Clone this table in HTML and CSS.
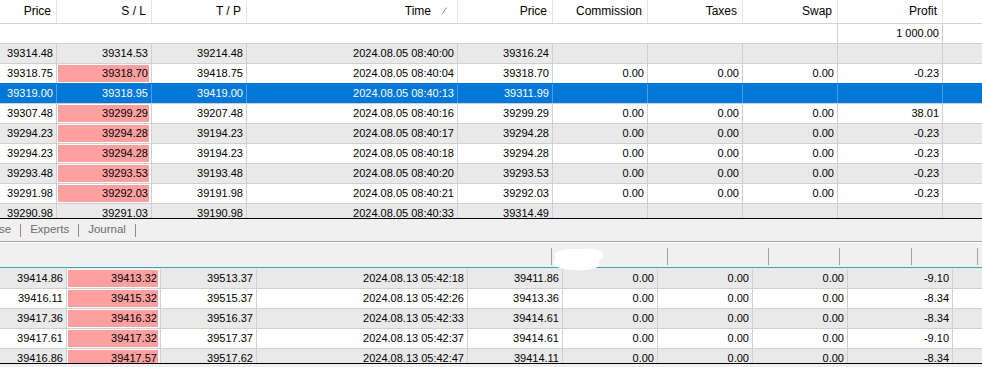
FILE: index.html
```html
<!DOCTYPE html>
<html>
<head>
<meta charset="utf-8">
<link rel="stylesheet" href="styles.css">
</head>
<body>
<div class="top">
  <div class="hdr gt">
    <div class="h">Price</div>
    <div class="h">S / L</div>
    <div class="h">T / P</div>
    <div class="h time">Time<svg class="sort" width="5" height="7" viewBox="0 0 5 7"><path d="M0.5 6.5 L4.5 0.5" stroke="#8a8a8a" stroke-width="1" fill="none"/></svg></div>
    <div class="h">Price</div>
    <div class="h">Commission</div>
    <div class="h">Taxes</div>
    <div class="h">Swap</div>
    <div class="h">Profit</div>
    <div class="h last"></div>
  </div>
  <div class="tot gt">
    <div class="c"></div><div class="c"></div><div class="c"></div><div class="c"></div><div class="c"></div><div class="c"></div><div class="c"></div>
    <div class="c b"></div>
    <div class="c b">1 000.00</div>
    <div class="c"></div>
  </div>
  <div class="r g gt"><div class="c">39314.48</div><div class="c">39314.53</div><div class="c">39214.48</div><div class="c">2024.08.05 08:40:00</div><div class="c">39316.24</div><div class="c"></div><div class="c"></div><div class="c"></div><div class="c"></div><div class="c last"></div></div>
  <div class="r gt"><div class="c">39318.75</div><div class="c sl">39318.70</div><div class="c">39418.75</div><div class="c">2024.08.05 08:40:04</div><div class="c">39318.70</div><div class="c">0.00</div><div class="c">0.00</div><div class="c">0.00</div><div class="c">-0.23</div><div class="c last"></div></div>
  <div class="r sel gt"><div class="c">39319.00</div><div class="c">39318.95</div><div class="c">39419.00</div><div class="c">2024.08.05 08:40:13</div><div class="c">39311.99</div><div class="c"></div><div class="c"></div><div class="c"></div><div class="c"></div><div class="c last"></div></div>
  <div class="r gt"><div class="c">39307.48</div><div class="c sl">39299.29</div><div class="c">39207.48</div><div class="c">2024.08.05 08:40:16</div><div class="c">39299.29</div><div class="c">0.00</div><div class="c">0.00</div><div class="c">0.00</div><div class="c">38.01</div><div class="c last"></div></div>
  <div class="r g gt"><div class="c">39294.23</div><div class="c sl">39294.28</div><div class="c">39194.23</div><div class="c">2024.08.05 08:40:17</div><div class="c">39294.28</div><div class="c">0.00</div><div class="c">0.00</div><div class="c">0.00</div><div class="c">-0.23</div><div class="c last"></div></div>
  <div class="r gt"><div class="c">39294.23</div><div class="c sl">39294.28</div><div class="c">39194.23</div><div class="c">2024.08.05 08:40:18</div><div class="c">39294.28</div><div class="c">0.00</div><div class="c">0.00</div><div class="c">0.00</div><div class="c">-0.23</div><div class="c last"></div></div>
  <div class="r g gt"><div class="c">39293.48</div><div class="c sl">39293.53</div><div class="c">39193.48</div><div class="c">2024.08.05 08:40:20</div><div class="c">39293.53</div><div class="c">0.00</div><div class="c">0.00</div><div class="c">0.00</div><div class="c">-0.23</div><div class="c last"></div></div>
  <div class="r gt"><div class="c">39291.98</div><div class="c sl">39292.03</div><div class="c">39191.98</div><div class="c">2024.08.05 08:40:21</div><div class="c">39292.03</div><div class="c">0.00</div><div class="c">0.00</div><div class="c">0.00</div><div class="c">-0.23</div><div class="c last"></div></div>
  <div class="r g gt"><div class="c">39290.98</div><div class="c">39291.03</div><div class="c">39190.98</div><div class="c">2024.08.05 08:40:33</div><div class="c">39314.49</div><div class="c"></div><div class="c"></div><div class="c"></div><div class="c"></div><div class="c last"></div></div>
</div>

<div class="tabs">
  <span class="tab first">se</span><span class="sep"></span>
  <span class="tab">Experts</span><span class="sep"></span>
  <span class="tab">Journal</span><span class="sep"></span>
</div>

<div class="bhdr">
  <div class="hc"></div><div class="hc s"></div><div class="hc s"></div><div class="hc s"></div><div class="hc s"></div><div class="hc s"></div><div class="hc s"></div>
  <svg class="blot" width="54" height="25" viewBox="0 0 54 25"><path d="M5 5 C12 1 24 2 34 2 C44 1 52 4 51 9 C50 13 45 14 47 17 C48 21 38 24 26 23 C16 23 6 22 3 18 C0 15 2 12 4 10 C2 8 2 6 5 5 Z" fill="#ffffff"/></svg>
</div>

<div class="bot">
  <div class="r g gb"><div class="c">39414.86</div><div class="c sl">39413.32</div><div class="c">39513.37</div><div class="c">2024.08.13 05:42:18</div><div class="c">39411.86</div><div class="c">0.00</div><div class="c">0.00</div><div class="c">0.00</div><div class="c">-9.10</div><div class="c last"></div></div>
  <div class="r gb"><div class="c">39416.11</div><div class="c sl">39415.32</div><div class="c">39515.37</div><div class="c">2024.08.13 05:42:26</div><div class="c">39413.36</div><div class="c">0.00</div><div class="c">0.00</div><div class="c">0.00</div><div class="c">-8.34</div><div class="c last"></div></div>
  <div class="r g gb"><div class="c">39417.36</div><div class="c sl">39416.32</div><div class="c">39516.37</div><div class="c">2024.08.13 05:42:33</div><div class="c">39414.61</div><div class="c">0.00</div><div class="c">0.00</div><div class="c">0.00</div><div class="c">-8.34</div><div class="c last"></div></div>
  <div class="r gb"><div class="c">39417.61</div><div class="c sl">39417.32</div><div class="c">39517.37</div><div class="c">2024.08.13 05:42:37</div><div class="c">39414.61</div><div class="c">0.00</div><div class="c">0.00</div><div class="c">0.00</div><div class="c">-9.10</div><div class="c last"></div></div>
  <div class="r g gb"><div class="c">39416.86</div><div class="c sl">39417.57</div><div class="c">39517.62</div><div class="c">2024.08.13 05:42:47</div><div class="c">39414.11</div><div class="c">0.00</div><div class="c">0.00</div><div class="c">0.00</div><div class="c">-8.34</div><div class="c last"></div></div>
</div>
</body>
</html>
```

FILE: styles.css
```css
* { box-sizing: border-box; }

body {
  margin: 0;
  width: 982px;
  height: 367px;
  overflow: hidden;
  background: #f0f0f0;
  font-family: "Liberation Sans", Arial, sans-serif;
  color: #000;
}

.gt {
  display: grid;
  grid-template-columns: 57px 95px 95px 211px 95px 95px 95px 95px 105px 1fr;
}

.gb {
  display: grid;
  grid-template-columns: 67px 94px 96px 211px 95px 95px 95px 95px 105px 1fr;
}

/* ---------- top table ---------- */
.top {
  height: 219px;
  overflow: hidden;
  background: #fff;
  border-bottom: 1px solid #000;
}

.hdr {
  height: 24px;
  border-bottom: 1px solid #d5d5d5;
}

.h {
  border-right: 1px solid #e5e5e5;
  text-align: right;
  padding-right: 5px;
  font-size: 12px;
  line-height: 23px;
  white-space: nowrap;
}

.h.last { border-right: none; }

.h.time {
  display: flex;
  justify-content: flex-end;
  align-items: center;
  padding-right: 10px;
}

.sort { margin-left: 11px; margin-top: -2px; }

.tot { height: 19px; }

.tot .c {
  border-right: 1px solid transparent;
  line-height: 18px;
}

.tot .c.b { border-right-color: #cfcfcf; }

/* ---------- rows ---------- */
.r {
  height: 20px;
  border-top: 1px solid #d0d0d0;
  background: #fff;
}

.r.g { background: #e9e9e9; }

.c {
  font-size: 11px;
  line-height: 19px;
  text-align: right;
  padding-right: 3px;
  white-space: nowrap;
  overflow: hidden;
  border-right: 1px solid #d0d0d0;
}

.c.last { border-right: none; }

.c.sl {
  background: #ffa0a0;
  box-shadow: inset 0 0 0 1px #ffffff, inset -1px 0 0 1px #ffffff;
}

.r.sel {
  background: #0078d7;
  border-top-color: #0078d7;
  color: #fff;
}

.r.sel .c { border-right-color: #4a9fe3; }

/* ---------- tabs ---------- */
.tabs {
  height: 23px;
  border-bottom: 1px solid #a0a0a0;
  display: flex;
  align-items: center;
  padding-bottom: 2px;
  font-size: 11.5px;
  color: #6d6d6d;
}

.tab.first { margin-left: -1px; }

.sep {
  width: 1px;
  height: 13px;
  background: #8c8c8c;
  margin: 2px 9px 0 9px;
}

/* ---------- bottom header ---------- */
.bhdr {
  position: relative;
  height: 26px;
  border-top: 1px solid #fff;
  border-bottom: 1px solid #35a8b8;
  background: #f0f0f0;
  display: grid;
  grid-template-columns: 551px 116px 101px 71px 72px 66px 1fr;
}

.hc { margin: 5px 0 2px 0; }

.hc.s { border-left: 1px solid #a0a0a0; }

.blot {
  position: absolute;
  left: 552px;
  top: 4px;
  z-index: 2;
}

/* ---------- bottom table ---------- */
.bot {
  height: 96px;
  overflow: hidden;
  background: #fff;
  border-bottom: 1px solid #000;
}

.bot .r:first-child { border-top-color: transparent; }
```
